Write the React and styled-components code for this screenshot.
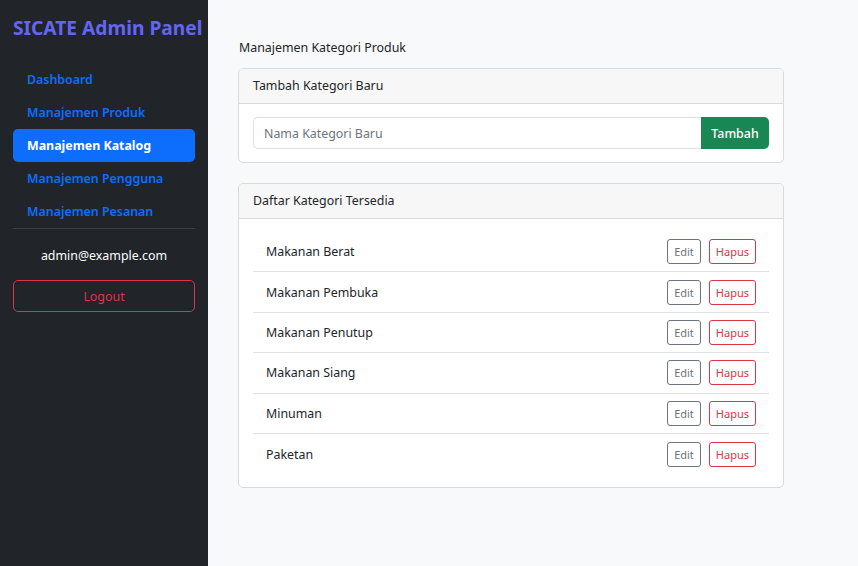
import React from "react";
import styled, { createGlobalStyle } from "styled-components";

const Global = createGlobalStyle`
  html, body { margin: 0; padding: 0; }
  body { font-family: "Segoe UI", "Noto Sans", "Liberation Sans", sans-serif; color: #212529; }
  * { box-sizing: border-box; }
`;

const Layout = styled.div`
  display: flex;
  width: 858px;
  height: 566px;
  overflow: hidden;
`;

const Sidebar = styled.aside`
  width: 208px;
  flex-shrink: 0;
  background: #212529;
  padding: 16px 13px;
  display: flex;
  flex-direction: column;
`;

const Brand = styled.div`
  color: #6366f1;
  font-size: 19.2px;
  font-weight: 700;
  white-space: nowrap;
  line-height: 24px;
  margin-bottom: 23px;
`;

const NavList = styled.nav`
  display: flex;
  flex-direction: column;
`;

const NavLink = styled.a`
  display: block;
  height: 33px;
  line-height: 33px;
  padding: 0 14px;
  border-radius: 5px;
  font-size: 12.4px;
  font-weight: ${(p) => (p.$active ? 700 : 600)};
  color: ${(p) => (p.$active ? "#ffffff" : "#0d6efd")};
  background: ${(p) => (p.$active ? "#0d6efd" : "transparent")};
  text-decoration: none;
`;

const Divider = styled.hr`
  border: 0;
  border-top: 1px solid #3a3f44;
  margin: 0;
`;

const Email = styled.div`
  color: #ffffff;
  font-size: 12.4px;
  text-align: center;
  margin: 17px 0 14px;
  line-height: 20px;
`;

const LogoutButton = styled.button`
  height: 32px;
  width: 100%;
  border: 1px solid #dc3545;
  border-radius: 5px;
  background: transparent;
  color: #dc3545;
  font-family: inherit;
  font-size: 12.4px;
`;

const Main = styled.main`
  flex: 1;
  background: #f8f9fa;
  padding: 39px 30px;
`;

const Heading = styled.h1`
  font-size: 12.4px;
  font-weight: 400;
  margin: 0 0 11px 1px;
  line-height: 18px;
`;

const Card = styled.section`
  width: 546px;
  background: #ffffff;
  border: 1px solid #d9dadb;
  border-radius: 5px;
  margin-bottom: 20px;
  overflow: hidden;
`;

const CardHeader = styled.div`
  height: 35px;
  line-height: 34px;
  padding: 0 14px;
  background: #f7f7f7;
  border-bottom: 1px solid #d9dadb;
  font-size: 12.4px;
`;

const CardBody = styled.div`
  padding: 13px 14px;
`;

const InputGroup = styled.div`
  display: flex;
  height: 32px;
`;

const TextInput = styled.input`
  flex: 1;
  border: 1px solid #dee2e6;
  border-right: 0;
  border-radius: 5px 0 0 5px;
  padding: 0 10px;
  font-family: inherit;
  font-size: 12.4px;
  color: #212529;
  outline: none;
  &::placeholder { color: #6c757d; }
`;

const AddButton = styled.button`
  width: 68px;
  border: 0;
  border-radius: 0 5px 5px 0;
  background: #198754;
  color: #ffffff;
  font-family: inherit;
  font-size: 12.4px;
  font-weight: 500;
`;

const List = styled.ul`
  list-style: none;
  margin: 0;
  padding: 0;
`;

const Row = styled.li`
  display: flex;
  align-items: center;
  justify-content: space-between;
  height: 40.4px;
  padding: 0 13px;
  font-size: 12.4px;
  border-bottom: ${(p) => (p.$last ? "0" : "1px solid #dee2e6")};
`;

const Actions = styled.div`
  display: flex;
  gap: 8px;
`;

const SmallButton = styled.button`
  height: 25px;
  padding: 0 6px;
  border: 1px solid ${(p) => p.$color};
  color: ${(p) => p.$color};
  background: transparent;
  border-radius: 3px;
  font-family: inherit;
  font-size: 11px;
`;

const nav = [
  "Dashboard",
  "Manajemen Produk",
  "Manajemen Katalog",
  "Manajemen Pengguna",
  "Manajemen Pesanan",
];

const categories = [
  "Makanan Berat",
  "Makanan Pembuka",
  "Makanan Penutup",
  "Makanan Siang",
  "Minuman",
  "Paketan",
];

export default function App() {
  return (
    <>
      <Global />
      <Layout>
        <Sidebar>
          <Brand>SICATE Admin Panel</Brand>
          <NavList>
            {nav.map((n) => (
              <NavLink key={n} href="#" $active={n === "Manajemen Katalog"}>
                {n}
              </NavLink>
            ))}
          </NavList>
          <Divider />
          <Email>admin@example.com</Email>
          <LogoutButton>Logout</LogoutButton>
        </Sidebar>
        <Main>
          <Heading>Manajemen Kategori Produk</Heading>
          <Card>
            <CardHeader>Tambah Kategori Baru</CardHeader>
            <CardBody>
              <InputGroup>
                <TextInput placeholder="Nama Kategori Baru" />
                <AddButton>Tambah</AddButton>
              </InputGroup>
            </CardBody>
          </Card>
          <Card>
            <CardHeader>Daftar Kategori Tersedia</CardHeader>
            <CardBody>
              <List>
                {categories.map((c, i) => (
                  <Row key={c} $last={i === categories.length - 1}>
                    <span>{c}</span>
                    <Actions>
                      <SmallButton $color="#6c757d">Edit</SmallButton>
                      <SmallButton $color="#dc3545">Hapus</SmallButton>
                    </Actions>
                  </Row>
                ))}
              </List>
            </CardBody>
          </Card>
        </Main>
      </Layout>
    </>
  );
}
